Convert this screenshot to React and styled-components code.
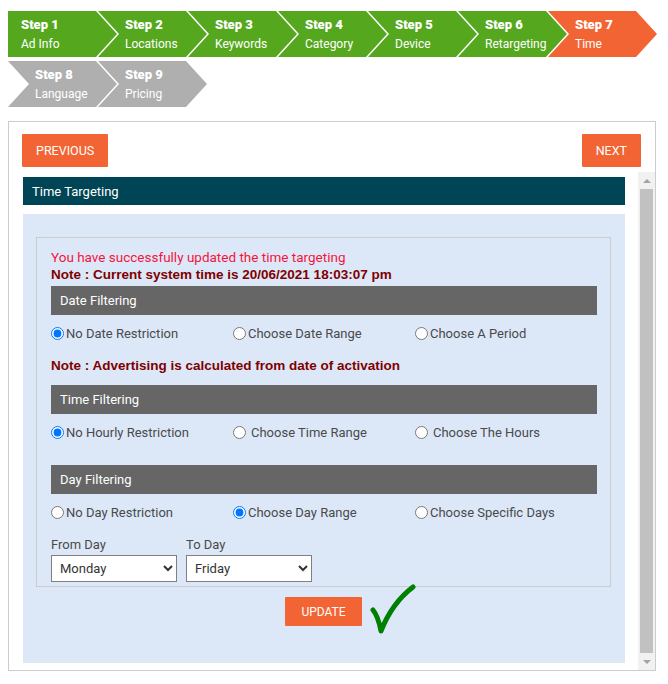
import React from "react";
import styled, { createGlobalStyle } from "styled-components";

const GlobalStyle = createGlobalStyle`
  body {
    margin: 8px;
    font-family: Roboto, "Liberation Sans", Arial, sans-serif;
    background: #fff;
    color: #444;
  }
`;

const StepsRow = styled.div`
  display: flex;
  margin-top: ${(p) => p.$top}px;
`;

const Step = styled.div`
  width: 109px;
  height: 46px;
  flex: none;
  margin-left: ${(p) => (p.$first ? 0 : -19)}px;
  background: ${(p) =>
    p.$state === "done" ? "#55a81e" : p.$state === "active" ? "#f26433" : "#afafaf"};
  clip-path: ${(p) =>
    p.$flat
      ? "polygon(0 0, calc(100% - 21px) 0, 100% 50%, calc(100% - 21px) 100%, 0 100%)"
      : "polygon(0 0, calc(100% - 21px) 0, 100% 50%, calc(100% - 21px) 100%, 0 100%, 21px 50%)"};
  color: #fff;
  display: flex;
  flex-direction: column;
  justify-content: center;
  gap: 1px;
  padding-left: ${(p) => (p.$flat ? 13 : 27)}px;
  box-sizing: border-box;
`;

const StepNum = styled.div`
  font-size: 13px;
  font-weight: 900;
  line-height: 18px;
`;

const StepName = styled.div`
  font-size: 12px;
  line-height: 18px;
`;

const Panel = styled.div`
  width: 648px;
  box-sizing: border-box;
  margin-top: 14px;
  border: 1px solid #cccccc;
  padding-top: 12px;
`;

const ButtonRow = styled.div`
  display: flex;
  justify-content: space-between;
  padding: 0 14px 0 13px;
`;

const NavButton = styled.button`
  height: 33px;
  padding: 0 14px;
  border: none;
  border-radius: 1px;
  background: #f26433;
  color: #fff;
  font-family: inherit;
  font-size: 12.5px;
  text-transform: uppercase;
`;

const ScrollArea = styled.div`
  display: flex;
  height: 498px;
  margin-top: 5px;
`;

const ScrollContent = styled.div`
  flex: 1;
  overflow: hidden;
  padding: 5px 13px 0 14px;
`;

const Scrollbar = styled.div`
  width: 17px;
  flex: none;
  background: #f1f1f1;
  display: flex;
  flex-direction: column;
  align-items: center;
`;

const ScrollArrow = styled.div`
  height: 17px;
  width: 17px;
  display: flex;
  align-items: center;
  justify-content: center;
  &::after {
    content: "";
    border-left: 4px solid transparent;
    border-right: 4px solid transparent;
    ${(p) => (p.$down ? "border-top" : "border-bottom")}: 4px solid #a3a3a3;
  }
`;

const ScrollThumb = styled.div`
  flex: 1;
  width: 13px;
  background: #c1c1c1;
`;

const TitleBar = styled.div`
  height: 28px;
  background: #004555;
  color: #fff;
  font-size: 13px;
  display: flex;
  align-items: center;
  padding-left: 9px;
`;

const BlueArea = styled.div`
  margin-top: 9px;
  background: #dce8f8;
  padding: 23px 14px 37px 13px;
`;

const InnerBox = styled.div`
  border: 1px solid #cccccc;
  padding: 10px 13px 4px 14px;
`;

const Message = styled.div`
  font-size: 13.5px;
  line-height: 18px;
  color: #f5143c;
`;

const Note = styled.div`
  font-family: "Liberation Sans", Arial, sans-serif;
  font-size: 13.5px;
  line-height: 18px;
  font-weight: 700;
  color: #800000;
  margin-top: ${(p) => p.$mt || 0}px;
`;

const SectionHeader = styled.div`
  height: 29px;
  background: #666666;
  color: #fff;
  font-size: 13px;
  display: flex;
  align-items: center;
  padding-left: 9px;
  margin-top: ${(p) => p.$mt}px;
`;

const RadioRow = styled.div`
  display: grid;
  grid-template-columns: repeat(3, 1fr);
  margin-top: 10px;
  line-height: 18px;
`;

const RadioLabel = styled.label`
  display: flex;
  align-items: center;
  font-size: 13px;
  color: #4a4a4a;
`;

const Radio = styled.input.attrs({ type: "radio" })`
  width: 13px;
  height: 13px;
  margin: 0 ${(p) => (p.$wide ? 5 : 2)}px 2px 0;
`;

const DayRow = styled.div`
  display: flex;
  gap: 9px;
  margin-top: 14px;
`;

const Field = styled.div`
  display: flex;
  flex-direction: column;
  gap: 1px;
`;

const FieldLabel = styled.span`
  font-size: 13px;
  line-height: 18px;
  color: #4a4a4a;
`;

const Select = styled.select`
  width: 126px;
  height: 27px;
  border: 1px solid #808080;
  background: #fff;
  color: #333;
  font-family: inherit;
  font-size: 13px;
  padding-left: 4px;
`;

const UpdateRow = styled.div`
  display: flex;
  justify-content: center;
  margin-top: 10px;
`;

const UpdateWrap = styled.div`
  position: relative;
`;

const UpdateButton = styled.button`
  height: 29px;
  width: 77px;
  border: none;
  border-radius: 1px;
  background: #f26433;
  color: #fff;
  font-family: inherit;
  font-size: 12px;
`;

const Check = styled.svg`
  position: absolute;
  left: calc(100% + 8px);
  top: -14px;
`;

const steps = [
  ["Step 1", "Ad Info", "done"],
  ["Step 2", "Locations", "done"],
  ["Step 3", "Keywords", "done"],
  ["Step 4", "Category", "done"],
  ["Step 5", "Device", "done"],
  ["Step 6", "Retargeting", "done"],
  ["Step 7", "Time", "active"],
];

const steps2 = [
  ["Step 8", "Language", "todo"],
  ["Step 9", "Pricing", "todo"],
];

const days = ["Sunday", "Monday", "Tuesday", "Wednesday", "Thursday", "Friday", "Saturday"];

function RadioGroup({ name, options, checked }) {
  return (
    <RadioRow>
      {options.map(([text, wide], i) => (
        <RadioLabel key={text}>
          <Radio name={name} $wide={wide} defaultChecked={i === checked} />
          {text}
        </RadioLabel>
      ))}
    </RadioRow>
  );
}

export default function App() {
  return (
    <>
      <GlobalStyle />
      <StepsRow $top={3}>
        {steps.map(([num, name, state], i) => (
          <Step key={num} $state={state} $first={i === 0} $flat={i === 0}>
            <StepNum>{num}</StepNum>
            <StepName>{name}</StepName>
          </Step>
        ))}
      </StepsRow>
      <StepsRow $top={4}>
        {steps2.map(([num, name, state], i) => (
          <Step key={num} $state={state} $first={i === 0}>
            <StepNum>{num}</StepNum>
            <StepName>{name}</StepName>
          </Step>
        ))}
      </StepsRow>

      <Panel>
        <ButtonRow>
          <NavButton>Previous</NavButton>
          <NavButton>Next</NavButton>
        </ButtonRow>
        <ScrollArea>
          <ScrollContent>
            <TitleBar>Time Targeting</TitleBar>
            <BlueArea>
              <InnerBox>
                <Message>You have successfully updated the time targeting</Message>
                <Note>Note : Current system time is 20/06/2021 18:03:07 pm</Note>

                <SectionHeader $mt={2}>Date Filtering</SectionHeader>
                <RadioGroup
                  name="date"
                  checked={0}
                  options={[["No Date Restriction"], ["Choose Date Range"], ["Choose A Period"]]}
                />
                <Note $mt={14}>Note : Advertising is calculated from date of activation</Note>

                <SectionHeader $mt={10}>Time Filtering</SectionHeader>
                <RadioGroup
                  name="time"
                  checked={0}
                  options={[
                    ["No Hourly Restriction"],
                    ["Choose Time Range", true],
                    ["Choose The Hours", true],
                  ]}
                />

                <SectionHeader $mt={23}>Day Filtering</SectionHeader>
                <RadioGroup
                  name="day"
                  checked={1}
                  options={[["No Day Restriction"], ["Choose Day Range"], ["Choose Specific Days"]]}
                />

                <DayRow>
                  <Field>
                    <FieldLabel>From Day</FieldLabel>
                    <Select defaultValue="Monday">
                      {days.map((d) => (
                        <option key={d}>{d}</option>
                      ))}
                    </Select>
                  </Field>
                  <Field>
                    <FieldLabel>To Day</FieldLabel>
                    <Select defaultValue="Friday">
                      {days.map((d) => (
                        <option key={d}>{d}</option>
                      ))}
                    </Select>
                  </Field>
                </DayRow>
              </InnerBox>

              <UpdateRow>
                <UpdateWrap>
                  <UpdateButton>UPDATE</UpdateButton>
                  <Check width="46" height="52" viewBox="0 0 46 52">
                    <path
                      d="M3 27 Q8 33 11 48 Q22 20 43 4"
                      fill="none"
                      stroke="#008000"
                      strokeWidth="5"
                      strokeLinecap="round"
                      strokeLinejoin="round"
                    />
                  </Check>
                </UpdateWrap>
              </UpdateRow>
            </BlueArea>
          </ScrollContent>
          <Scrollbar>
            <ScrollArrow />
            <ScrollThumb />
            <ScrollArrow $down />
          </Scrollbar>
        </ScrollArea>
      </Panel>
    </>
  );
}
